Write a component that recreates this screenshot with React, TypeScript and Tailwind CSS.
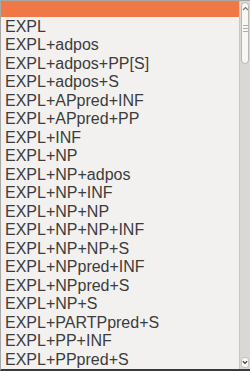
const items = [
	"EXPL",
	"EXPL+adpos",
	"EXPL+adpos+PP[S]",
	"EXPL+adpos+S",
	"EXPL+APpred+INF",
	"EXPL+APpred+PP",
	"EXPL+INF",
	"EXPL+NP",
	"EXPL+NP+adpos",
	"EXPL+NP+INF",
	"EXPL+NP+NP",
	"EXPL+NP+NP+INF",
	"EXPL+NP+NP+S",
	"EXPL+NPpred+INF",
	"EXPL+NPpred+S",
	"EXPL+NP+S",
	"EXPL+PARTPpred+S",
	"EXPL+PP+INF",
	"EXPL+PPpred+S",
];

export default function App() {
	return (
		<div
			className="w-[250px] h-[371px] overflow-hidden bg-[#f2f1f0] border-t border-l border-[#a9a7a3] border-b-2 border-b-[#3a3a3a] flex"
			style={{ fontFamily: '"Liberation Sans", Arial, sans-serif' }}
		>
			{/* list */}
			<div className="flex-1 flex flex-col text-[16px] text-[#3c3c3c]">
				<div className="h-[16px] mb-[1px] bg-[#f07746]" />
				{items.map((it) => (
					<div key={it} className="h-[18.5px] leading-[18.5px] pl-[4px] whitespace-nowrap">
						{it}
					</div>
				))}
			</div>

			{/* scrollbar */}
			<div className="w-[11px] flex flex-col bg-[#d9d8d5] border-l border-[#c9c7c3] pt-[1px]">
				<div className="h-[62px] mx-[1px] rounded-full bg-[#f7f7f6] border border-[#b9b7b3] flex flex-col items-center">
					<svg width="7" height="5" viewBox="0 0 7 5" className="mt-[3px]">
						<path d="M1 4 L3.5 1.5 L6 4" stroke="#7a7874" strokeWidth="1.2" fill="none" />
					</svg>
					<div className="mt-[14px] flex flex-col gap-[2px]">
						<div className="w-[5px] h-px bg-[#b0aeaa]" />
						<div className="w-[5px] h-px bg-[#b0aeaa]" />
						<div className="w-[5px] h-px bg-[#b0aeaa]" />
					</div>
				</div>
				<div className="flex-1" />
				<div className="h-[11px] mx-[1px] mb-[1px] rounded-[3px] bg-[#f7f7f6] border border-[#c4c2be] flex items-center justify-center">
					<svg width="7" height="5" viewBox="0 0 7 5">
						<path d="M1 1 L3.5 3.5 L6 1" stroke="#3c3c3c" strokeWidth="1.4" fill="none" />
					</svg>
				</div>
			</div>
		</div>
	);
}
